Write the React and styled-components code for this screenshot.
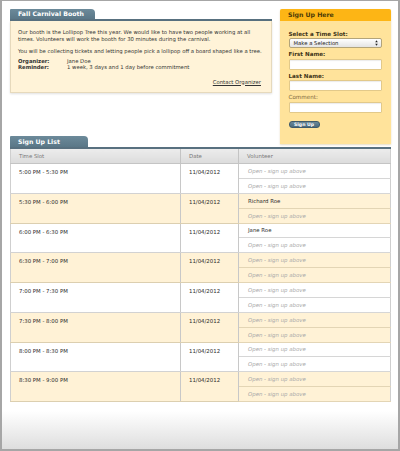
import React from "react";
import styled, { createGlobalStyle } from "styled-components";

const Global = createGlobalStyle`
  html, body { margin: 0; padding: 0; background: #fff; }
  body { font-family: "DejaVu Sans", Verdana, sans-serif; color: #333; }
  * { box-sizing: border-box; }
`;

const Frame = styled.div`
  width: 400px;
  height: 451px;
  border: 2px solid #a6a6a6;
  border-top-width: 1px;
  padding: 8px 7px 0 8px;
  background: linear-gradient(to bottom, #fff 0, #fff 410px, #dedede 100%);
  overflow: hidden;
`;

const Layout = styled.div`
  display: grid;
  grid-template-columns: 262px 111px;
  column-gap: 8px;
  grid-template-rows: auto auto auto;
  align-items: start;
`;

const Booth = styled.section`
  grid-column: 1;
  grid-row: 1;
  display: flex;
  flex-direction: column;
`;

const Tab = styled.div`
  width: ${(p) => p.$w}px;
  height: ${(p) => p.$h}px;
  background: linear-gradient(#6c8a9a, #5a7787);
  color: #fff;
  font-weight: bold;
  font-size: 6.2px;
  line-height: ${(p) => p.$h}px;
  padding-left: 8px;
  border-radius: 1px 4px 0 0;
  white-space: nowrap;
`;

const Rule = styled.div`
  height: 2px;
  background: #58707f;
`;

const BoothBody = styled.div`
  background: #fff3d8;
  border: 1px solid #e6d9bc;
  border-top: none;
  box-shadow: 0 1px 2px rgba(0, 0, 0, 0.12);
  padding: 8px 7px 7px 7px;
  font-size: 5.3px;
  line-height: 6.5px;
  color: #333;
`;

const Para = styled.p`
  margin: 0 0 ${(p) => p.$mb}px 0;
`;

const InfoGrid = styled.div`
  display: grid;
  grid-template-columns: 49px 1fr;
  margin-bottom: 8px;
`;

const InfoLabel = styled.span`
  font-weight: bold;
`;

const ContactRow = styled.div`
  text-align: right;
  padding-right: 3px;
`;

const ContactLink = styled.a`
  color: #333;
  text-decoration: underline;
`;

const SignUp = styled.section`
  grid-column: 2;
  grid-row: 1 / 3;
  background: #ffe39b;
  border-radius: 2px 2px 0 0;
  box-shadow: 0 1px 2px rgba(160, 120, 20, 0.25);
  padding-bottom: 16px;
`;

const SignUpHeader = styled.div`
  height: 11.5px;
  line-height: 11.5px;
  background: #fdb515;
  border-radius: 2px 2px 0 0;
  color: #4a3a08;
  font-weight: bold;
  font-size: 6.2px;
  padding-left: 8px;
  margin-bottom: 10px;
`;

const Form = styled.div`
  padding: 0 9px 0 8.5px;
  display: flex;
  flex-direction: column;
`;

const Label = styled.label`
  font-size: 5.6px;
  line-height: 6px;
  font-weight: ${(p) => (p.$light ? "normal" : "bold")};
  color: ${(p) => (p.$light ? "#7d6a3e" : "#3e3418")};
  margin-bottom: 1.5px;
`;

const Select = styled.div`
  height: 10px;
  border: 1px solid #b3a47a;
  border-radius: 2px;
  background: linear-gradient(#ffffff, #e4e4e4);
  display: flex;
  align-items: center;
  justify-content: space-between;
  padding: 0 3px 0 4px;
  font-size: 5.3px;
  color: #222;
  margin-bottom: 3px;
`;

const Input = styled.div`
  height: 11px;
  background: #fff;
  border: 1px solid #e2c98a;
  border-radius: 1px;
  box-shadow: inset 0 1px 1px rgba(0, 0, 0, 0.08);
  margin-bottom: 3px;
`;

const Button = styled.button`
  margin-top: 5px;
  width: 31px;
  height: 7px;
  padding: 0;
  border: 1px solid #3f5a6a;
  border-radius: 3px;
  background: linear-gradient(#6a899a, #4c6b7c);
  color: #fff;
  font-family: inherit;
  font-weight: bold;
  font-size: 4.6px;
  line-height: 5px;
`;

const ListTab = styled.div`
  grid-column: 1;
  grid-row: 2;
  margin-top: 42.5px;
`;

const ListArea = styled.section`
  grid-column: 1 / 3;
  grid-row: 3;
`;

const Table = styled.table`
  width: 100%;
  border-collapse: collapse;
  table-layout: fixed;
  font-size: 5.4px;
  border-left: 1px solid #cfcfcf;
  border-right: 1px solid #cfcfcf;
`;

const Th = styled.th`
  height: 15px;
  text-align: left;
  font-weight: normal;
  color: #777;
  padding: 0 0 0 8px;
  background: linear-gradient(#ececec, #dcdcdc);
  border-bottom: 1px solid #c4c4c4;
  border-right: 1px solid #c4c4c4;
  width: ${(p) => p.$w}px;
  &:last-child { border-right: none; }
`;

const Tr = styled.tr`
  height: 14.875px;
  background: ${(p) => (p.$alt ? "#fff2d6" : "#fff")};
`;

const SlotCell = styled.td`
  vertical-align: top;
  padding: 5px 0 0 ${(p) => p.$pl}px;
  line-height: 6px;
  color: #2a2a2a;
  border-right: 1px solid #c8c8c8;
  border-bottom: 1px solid ${(p) => (p.$alt ? "#dccfb0" : "#d2d2d2")};
  white-space: nowrap;
`;

const VolCell = styled.td`
  padding: 0 0 0 9px;
  line-height: 6px;
  vertical-align: middle;
  border-bottom: 1px solid ${(p) => (p.$alt ? "#e3d5b5" : "#d6d6d6")};
  color: ${(p) => (p.$name ? "#2a2a2a" : "#a9a9a9")};
  font-style: ${(p) => (p.$name ? "normal" : "italic")};
  white-space: nowrap;
`;

const Arrows = () => (
  <svg width="3" height="6" viewBox="0 0 3 6">
    <path d="M1.5 0.3 L2.8 2.3 L0.2 2.3 Z" fill="#222" />
    <path d="M1.5 5.7 L2.8 3.7 L0.2 3.7 Z" fill="#222" />
  </svg>
);

const slots = [
  ["5:00 PM - 5:30 PM", []],
  ["5:30 PM - 6:00 PM", ["Richard Roe"]],
  ["6:00 PM - 6:30 PM", ["Jane Roe"]],
  ["6:30 PM - 7:00 PM", []],
  ["7:00 PM - 7:30 PM", []],
  ["7:30 PM - 8:00 PM", []],
  ["8:00 PM - 8:30 PM", []],
  ["8:30 PM - 9:00 PM", []],
];

const OPEN = "Open - sign up above";

export default function App() {
  return (
    <>
      <Global />
      <Frame>
        <Layout>
          <Booth>
            <Tab $w={85} $h={10}>Fall Carnival Booth</Tab>
            <Rule />
            <BoothBody>
              <Para $mb={5.5}>
                Our booth is the Lollipop Tree this year. We would like to have two people working at all
                times. Volunteers will work the booth for 30 minutes during the carnival.
              </Para>
              <Para $mb={3.5}>
                You will be collecting tickets and letting people pick a lollipop off a board shaped like a tree.
              </Para>
              <InfoGrid>
                <InfoLabel>Organizer:</InfoLabel>
                <span>Jane Doe</span>
                <InfoLabel>Reminder:</InfoLabel>
                <span>1 week, 3 days and 1 day before commitment</span>
              </InfoGrid>
              <ContactRow>
                <ContactLink>Contact Organizer</ContactLink>
              </ContactRow>
            </BoothBody>
          </Booth>

          <SignUp>
            <SignUpHeader>Sign Up Here</SignUpHeader>
            <Form>
              <Label>Select a Time Slot:</Label>
              <Select>
                <span>Make a Selection</span>
                <Arrows />
              </Select>
              <Label>First Name:</Label>
              <Input />
              <Label>Last Name:</Label>
              <Input />
              <Label $light>Comment:</Label>
              <Input />
              <Button>Sign Up</Button>
            </Form>
          </SignUp>

          <ListTab>
            <Tab $w={78} $h={11}>Sign Up List</Tab>
          </ListTab>

          <ListArea>
            <Rule />
            <Table>
              <thead>
                <tr>
                  <Th $w={170}>Time Slot</Th>
                  <Th $w={58}>Date</Th>
                  <Th>Volunteer</Th>
                </tr>
              </thead>
              <tbody>
                {slots.map(([time, names], i) => {
                  const alt = i % 2 === 1;
                  return (
                    <React.Fragment key={time}>
                      <Tr $alt={alt}>
                        <SlotCell rowSpan={2} $alt={alt} $pl={8}>{time}</SlotCell>
                        <SlotCell rowSpan={2} $alt={alt} $pl={8}>11/04/2012</SlotCell>
                        <VolCell $alt={alt} $name={!!names[0]}>{names[0] || OPEN}</VolCell>
                      </Tr>
                      <Tr $alt={alt}>
                        <VolCell $alt={alt} $name={!!names[1]}>{names[1] || OPEN}</VolCell>
                      </Tr>
                    </React.Fragment>
                  );
                })}
              </tbody>
            </Table>
          </ListArea>
        </Layout>
      </Frame>
    </>
  );
}
